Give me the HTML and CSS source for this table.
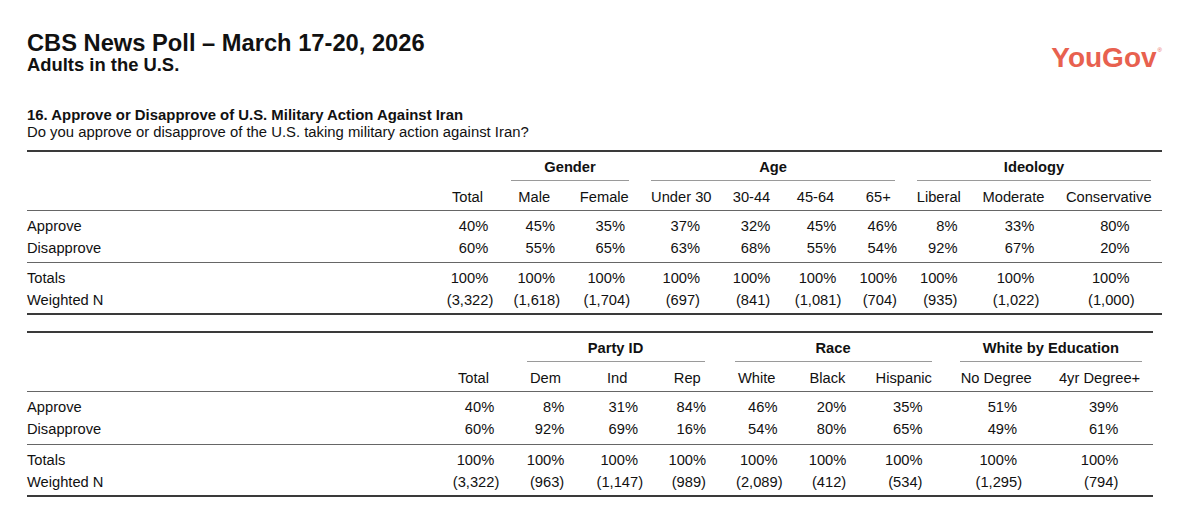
FILE: index.html
```html
<!DOCTYPE html>
<html lang="en">
<head>
<meta charset="utf-8">
<title>CBS News Poll – March 17-20, 2026</title>
<link rel="stylesheet" href="styles.css">
</head>
<body>
<div class="page">
  <header class="top">
    <div class="titles">
      <h1 class="title">CBS News Poll – March 17-20, 2026</h1>
      <h2 class="subtitle">Adults in the U.S.</h2>
    </div>
    <div class="logo">YouGov<span class="reg">®</span></div>
  </header>

  <section class="question">
    <h3 class="q-title">16. Approve or Disapprove of U.S. Military Action Against Iran</h3>
    <p class="q-text">Do you approve or disapprove of the U.S. taking military action against Iran?</p>
  </section>

  <table class="xt t1">
    <colgroup>
      <col class="a1"><col class="a2"><col class="a3"><col class="a4"><col class="a5"><col class="a6"><col class="a7"><col class="a8"><col class="a9"><col class="a10"><col class="a11">
    </colgroup>
    <thead>
      <tr class="gh">
        <th></th><th></th>
        <th colspan="2"><div class="grp">Gender</div></th>
        <th colspan="4"><div class="grp">Age</div></th>
        <th colspan="3"><div class="grp">Ideology</div></th>
      </tr>
      <tr class="ch">
        <th></th><th>Total</th><th>Male</th><th>Female</th><th>Under 30</th><th>30-44</th><th>45-64</th><th>65+</th><th>Liberal</th><th>Moderate</th><th>Conservative</th>
      </tr>
    </thead>
    <tbody class="resp">
      <tr class="r1">
        <td class="lbl">Approve</td>
        <td class="w"><span class="v">40%</span></td><td class="w"><span class="v">45%</span></td><td class="w"><span class="v">35%</span></td>
        <td><span class="v">37%</span></td><td><span class="v">32%</span></td><td class="w"><span class="v">45%</span></td><td><span class="v">46%</span></td>
        <td><span class="v">8%</span></td><td class="w"><span class="v">33%</span></td><td class="w"><span class="v">80%</span></td>
      </tr>
      <tr class="r2">
        <td class="lbl">Disapprove</td>
        <td class="w"><span class="v">60%</span></td><td class="w"><span class="v">55%</span></td><td class="w"><span class="v">65%</span></td>
        <td><span class="v">63%</span></td><td><span class="v">68%</span></td><td class="w"><span class="v">55%</span></td><td><span class="v">54%</span></td>
        <td><span class="v">92%</span></td><td class="w"><span class="v">67%</span></td><td class="w"><span class="v">20%</span></td>
      </tr>
    </tbody>
    <tbody class="tot">
      <tr class="r1">
        <td class="lbl">Totals</td>
        <td class="w"><span class="v">100%</span></td><td class="w"><span class="v">100%</span></td><td class="w"><span class="v">100%</span></td>
        <td><span class="v">100%</span></td><td><span class="v">100%</span></td><td class="w"><span class="v">100%</span></td><td><span class="v">100%</span></td>
        <td><span class="v">100%</span></td><td class="w"><span class="v">100%</span></td><td class="w"><span class="v">100%</span></td>
      </tr>
      <tr class="r2">
        <td class="lbl">Weighted N</td>
        <td class="w"><span class="v">(3,322)</span></td><td class="w"><span class="v">(1,618)</span></td><td class="w"><span class="v">(1,704)</span></td>
        <td><span class="v">(697)</span></td><td><span class="v">(841)</span></td><td class="w"><span class="v">(1,081)</span></td><td><span class="v">(704)</span></td>
        <td><span class="v">(935)</span></td><td class="w"><span class="v">(1,022)</span></td><td class="w"><span class="v">(1,000)</span></td>
      </tr>
    </tbody>
  </table>

  <table class="xt t2">
    <colgroup>
      <col class="b1"><col class="b2"><col class="b3"><col class="b4"><col class="b5"><col class="b6"><col class="b7"><col class="b8"><col class="b9"><col class="b10">
    </colgroup>
    <thead>
      <tr class="gh">
        <th></th><th></th>
        <th colspan="3"><div class="grp">Party ID</div></th>
        <th colspan="3"><div class="grp">Race</div></th>
        <th colspan="2"><div class="grp last">White by Education</div></th>
      </tr>
      <tr class="ch">
        <th></th><th>Total</th><th>Dem</th><th>Ind</th><th>Rep</th><th>White</th><th>Black</th><th>Hispanic</th><th>No Degree</th><th>4yr Degree+</th>
      </tr>
    </thead>
    <tbody class="resp">
      <tr class="r1">
        <td class="lbl">Approve</td>
        <td class="w"><span class="v">40%</span></td><td><span class="v">8%</span></td><td class="w"><span class="v">31%</span></td><td><span class="v">84%</span></td>
        <td class="w"><span class="v">46%</span></td><td><span class="v">20%</span></td><td><span class="v">35%</span></td>
        <td class="w"><span class="v">51%</span></td><td><span class="v">39%</span></td>
      </tr>
      <tr class="r2">
        <td class="lbl">Disapprove</td>
        <td class="w"><span class="v">60%</span></td><td><span class="v">92%</span></td><td class="w"><span class="v">69%</span></td><td><span class="v">16%</span></td>
        <td class="w"><span class="v">54%</span></td><td><span class="v">80%</span></td><td><span class="v">65%</span></td>
        <td class="w"><span class="v">49%</span></td><td><span class="v">61%</span></td>
      </tr>
    </tbody>
    <tbody class="tot">
      <tr class="r1">
        <td class="lbl">Totals</td>
        <td class="w"><span class="v">100%</span></td><td><span class="v">100%</span></td><td class="w"><span class="v">100%</span></td><td><span class="v">100%</span></td>
        <td class="w"><span class="v">100%</span></td><td><span class="v">100%</span></td><td><span class="v">100%</span></td>
        <td class="w"><span class="v">100%</span></td><td><span class="v">100%</span></td>
      </tr>
      <tr class="r2">
        <td class="lbl">Weighted N</td>
        <td class="w"><span class="v">(3,322)</span></td><td><span class="v">(963)</span></td><td class="w"><span class="v">(1,147)</span></td><td><span class="v">(989)</span></td>
        <td class="w"><span class="v">(2,089)</span></td><td><span class="v">(412)</span></td><td><span class="v">(534)</span></td>
        <td class="w"><span class="v">(1,295)</span></td><td><span class="v">(794)</span></td>
      </tr>
    </tbody>
  </table>
</div>
</body>
</html>
```

FILE: styles.css
```css
body {
  margin: 0;
  background: #ffffff;
  color: #111111;
  font-family: "Liberation Sans", Arial, Helvetica, sans-serif;
}

.page {
  padding: 33px 0 0 27px;
  width: 1135px;
}

/* ---------- header ---------- */
.top {
  display: flex;
  justify-content: space-between;
  align-items: flex-start;
}

.title {
  margin: 0;
  font-size: 23.7px;
  line-height: 21px;
  font-weight: 700;
}

.subtitle {
  margin: 2px 0 0;
  font-size: 18.4px;
  line-height: 18px;
  font-weight: 700;
}

.logo {
  margin-top: 11px;
  font-size: 28px;
  line-height: 28px;
  font-weight: 700;
  color: #e8614f;
}

.reg {
  font-size: 6px;
  font-weight: 400;
  vertical-align: 15px;
  line-height: 1;
  margin-left: 1px;
}

/* ---------- question ---------- */
.question {
  margin-top: 33px;
}

.q-title {
  margin: 0;
  font-size: 14.9px;
  line-height: 17px;
  font-weight: 700;
}

.q-text {
  margin: 0;
  font-size: 14.85px;
  line-height: 16px;
}

/* ---------- crosstab tables ---------- */
.xt {
  border-collapse: separate;
  border-spacing: 0;
  table-layout: fixed;
  border-top: 2px solid #3a3a3a;
  border-bottom: 2px solid #3a3a3a;
  font-size: 14.7px;
  margin-top: 9.5px;
}

.t1 { width: 1135px; }
.t2 { width: 1126px; margin-top: 16.2px; }

.t1 .a1 { width: 408px; }
.t1 .a2 { width: 65px; }
.t1 .a3 { width: 68.5px; }
.t1 .a4 { width: 71.5px; }
.t1 .a5 { width: 82.5px; }
.t1 .a6 { width: 58px; }
.t1 .a7 { width: 70px; }
.t1 .a8 { width: 55.5px; }
.t1 .a9 { width: 65.5px; }
.t1 .a10 { width: 84px; }
.t1 .a11 { width: 106.5px; }

.t2 .b1 { width: 408.5px; }
.t2 .b2 { width: 76px; }
.t2 .b3 { width: 68px; }
.t2 .b4 { width: 75.5px; }
.t2 .b5 { width: 64.5px; }
.t2 .b6 { width: 74.5px; }
.t2 .b7 { width: 67px; }
.t2 .b8 { width: 85.5px; }
.t2 .b9 { width: 99.5px; }
.t2 .b10 { width: 107px; }

.xt th,
.xt td {
  padding: 0;
  font-weight: 400;
  line-height: 22px;
  white-space: nowrap;
  text-align: center;
}

.xt .gh th {
  padding-top: 4px;
  font-weight: 700;
  vertical-align: top;
}

.grp {
  padding-bottom: 2px;
  border-bottom: 1px solid #9a9a9a;
  margin: 0 11px;
}

.t2 .grp { margin: 0 15px; }
.t2 .grp.last { margin: 0 11px 0 13px; }

.xt .ch th {
  padding: 5px 0 2px;
  border-bottom: 1px solid #666666;
}

.xt .r1 td { padding-top: 4px; }

.xt .resp .r2 td {
  padding-bottom: 3.5px;
  border-bottom: 1px solid #666666;
}

.xt .tot .r2 td { padding-bottom: 2.3px; }

.xt td.lbl { text-align: left; }

.v {
  display: inline-block;
  width: 37.5px;
  text-align: right;
  white-space: nowrap;
}

.w .v { width: 41.5px; }
```
